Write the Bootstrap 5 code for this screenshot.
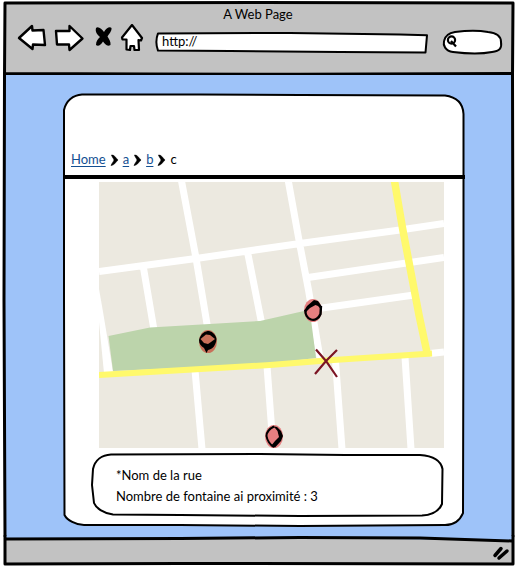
<!DOCTYPE html>
<html lang="fr">
<head>
<meta charset="utf-8">
<meta name="viewport" content="width=device-width, initial-scale=1">
<title>A Web Page</title>
<link href="https://cdn.jsdelivr.net/npm/bootstrap@5.3.0/dist/css/bootstrap.min.css" rel="stylesheet">
<style>
  body { font-family: Lato, "Open Sans", sans-serif; font-size: 13px; line-height: 21px; color: #000; background: #fff; }
  /* A sketched outline and the content it surrounds share one grid cell. */
  .sketch { display: grid; grid-template-columns: minmax(0, 1fr); }
  .sketch > * { grid-area: 1 / 1; min-width: 0; }
  .outline { width: 100%; height: 0; min-height: 100%; overflow: visible; }
  .outline path, .outline line { vector-effect: non-scaling-stroke; }
  .ink { stroke: #000; stroke-width: 3; stroke-linecap: round; stroke-linejoin: round; fill: none; }
  .thin { stroke-width: 2; }
  .chrome-bar { height: 75px; }
  .chrome-body { padding: 3px 12px 0 17px; }
  .page-title { line-height: 23px; padding-right: 4px; }
  .tools { height: 32px; margin-top: -2px; }
  .tool { display: block; padding: 0; border: 0; background: none; line-height: 0; }
  .tool svg, .crumb-sep, .lens, .grip { display: block; flex: none; }
  .address { height: 21px; margin-left: 10px; margin-right: 14px; margin-top: 8px; }
  .address .field { height: 19px; }
  .finder { width: 61px; height: 25px; margin-top: 5px; }
  .field { border: 0; background: transparent; padding: 0 7px; width: 100%; color: #000; outline-offset: -3px; }
  .finder .field { padding: 0 6px 0 2px; }
  .viewport-body { padding: 19px 50px 9px 63px; }
  .site-head { height: 81px; padding: 0 0 5px 8px; }
  .site-head a { color: #134f92; text-underline-offset: 2px; }
  .trail { gap: 4px; }
  .rule { height: 4px; background: #000; margin-bottom: 3px; }
  .map-box { padding: 0 21px 0 36px; }
  .map-box svg { display: block; width: 100%; height: auto; }
  .street-note { margin: 5px 21px 10px 28px; }
  .note-text { padding: 12px 24px 9px 25px; }
  .foot-bar { height: 31px; }
  .grip-row { padding: 8px 5px 0 0; }
</style>
<script src="https://cdn.jsdelivr.net/npm/bootstrap@5.3.0/dist/js/bootstrap.bundle.min.js"></script>
</head>
<body class="d-flex flex-column min-vh-100">

<header class="sketch chrome-bar">
  <svg class="outline" viewBox="0 0 515 75" preserveAspectRatio="none" aria-hidden="true">
    <path fill="#c2c2c2" d="M5 3H513V75H5z"/>
    <path class="ink" d="M4.500 75L5 3L260 2.500L513 3L512.500 75M5 73.500L150 74L300 74.200L512 73.500"/>
  </svg>
  <div class="chrome-body">
    <div class="page-title text-center">A Web Page</div>
    <div class="tools d-flex align-items-start">
      <button class="tool" type="button" aria-label="Back">
        <svg width="36" height="28" viewBox="17 24 36 28"><path d="M19 38L32 26L32.500 30.500L43.500 30L45 45L33 44.500L32.500 49z" fill="#fff" stroke="#000" stroke-width="2.400" stroke-linejoin="round"/></svg>
      </button>
      <button class="tool" type="button" aria-label="Forward">
        <svg width="38" height="28" viewBox="53 24 38 28"><path d="M56 31L69.500 31L69.500 26L82.500 38.500L69.500 50L69 44.500L57 44.500z" fill="#fff" stroke="#000" stroke-width="2.400" stroke-linejoin="round"/></svg>
      </button>
      <button class="tool" type="button" aria-label="Stop">
        <svg width="28" height="28" viewBox="91 24 28 28"><path d="M96 28C98 26 102 29 104 32C106 28 110 26 111.500 28C112 31 109 34 107.500 36.500C109 39 111 42 110.500 45C107 47 105 44 103 41.500C101 45 98 47 96 45C96 41 98 39 100 37C97 34 95 32 96 28z"/></svg>
      </button>
      <button class="tool" type="button" aria-label="Home page">
        <svg width="26" height="28" viewBox="119 24 26 28"><path d="M132 25L142 38L141 40.500L138.500 40L139 50L134.500 50L134 46L130.500 46L130 50L126.500 49.500L126.500 39.500L122.500 39.500L122 37.500z" fill="#fff" stroke="#000" stroke-width="2.200" stroke-linejoin="round"/></svg>
      </button>
      <div class="sketch address flex-grow-1">
        <svg class="outline" viewBox="155 31 273 22" preserveAspectRatio="none" aria-hidden="true">
          <path class="ink thin" style="fill:#fff" d="M158 32.500L290 32L400 33.500L427 34.500L425.500 52.500L340 52L230 51L158 50.500C156 45 156 38 158 32.500z"/>
        </svg>
        <input class="field" type="text" value="http://" aria-label="Address">
      </div>
      <div class="sketch finder">
        <svg class="outline" viewBox="442 29 61 25" preserveAspectRatio="none" aria-hidden="true">
          <path class="ink thin" style="fill:#fff" d="M455 32C470 30 480 30.500 488 32C498 33 501 37 501 42C502 48 500 51 492 52C482 54 465 53.500 453 52C445 51 443 45 444 41C445 36 449 33 455 32z"/>
        </svg>
        <label class="d-flex align-items-center ps-1">
          <svg class="lens" width="11" height="13" viewBox="446 37 11 13" aria-hidden="true"><circle cx="451.500" cy="42" r="3.600" fill="#fff" stroke="#000" stroke-width="2.200"/><path d="M451 43L456 48.500" stroke="#000" stroke-width="2.200"/></svg>
          <input class="field" type="search" aria-label="Search">
        </label>
      </div>
    </div>
  </div>
</header>

<main class="sketch flex-grow-1">
  <svg class="outline" viewBox="0 75 515 461" preserveAspectRatio="none" aria-hidden="true">
    <path fill="#9ec3f9" d="M4 75H513V536H4z"/>
    <path class="ink" d="M4.500 75L4 300L5 536M512.500 75L513 300L513 536"/>
  </svg>
  <div class="viewport-body">
    <div class="sketch">
      <svg class="outline" viewBox="63 94 402 433" preserveAspectRatio="none" aria-hidden="true">
        <path class="ink thin" style="fill:#fff" d="M82 94.500L200 94.500L300 95L445 95.500C456 97 463 103 463.500 114L463.500 300L463 514C460 521 454 526 445 526L300 527L180 526L84 526C76 526 67 521 64.500 516L64 300L64 110C66 101 73 95 82 94.500z"/>
      </svg>
      <div>
        <nav class="site-head d-flex align-items-end" aria-label="breadcrumb">
          <ol class="trail list-unstyled d-flex align-items-center mb-0">
            <li><a href="#home">Home</a></li>
            <li aria-hidden="true"><svg class="crumb-sep" width="9" height="12" viewBox="0 0 9 12"><path d="M1.500 1C4.500 1 5 3 8 6C5 9 4.500 11 1 11.500C2 9 4 7 4 6C4 5 2 3 1.500 1z" stroke="#000" stroke-width=".6"/></svg></li>
            <li><a href="#a">a</a></li>
            <li aria-hidden="true"><svg class="crumb-sep" width="9" height="12" viewBox="0 0 9 12"><path d="M1.500 1C4.500 1 5 3 8 6C5 9 4.500 11 1 11.500C2 9 4 7 4 6C4 5 2 3 1.500 1z" stroke="#000" stroke-width=".6"/></svg></li>
            <li><a href="#b">b</a></li>
            <li aria-hidden="true"><svg class="crumb-sep" width="9" height="12" viewBox="0 0 9 12"><path d="M1.500 1C4.500 1 5 3 8 6C5 9 4.500 11 1 11.500C2 9 4 7 4 6C4 5 2 3 1.500 1z" stroke="#000" stroke-width=".6"/></svg></li>
            <li aria-current="page">c</li>
          </ol>
        </nav>
        <div class="rule"></div>
        <div class="map-box">
          <svg viewBox="99 182 345 266" role="img" aria-label="Plan du quartier">
            <path fill="#ece9e0" d="M99 182H444V448H99z"/>
            <path fill="#fff" d="M99 289L102.700 310L113 372L104 373L99 322z"/>
            <g fill="none" stroke="#fff" stroke-width="7">
              <path d="M181.500 181L196 258L208 330M99 271.500L196 258.500L300 243.500L400 230L444 223.500M143.500 268L154 330M247.500 252L262 325M288.300 181L299.500 243L308.500 290L320 358M308 277.500L444 257.500M315 309L414 295M430 353.500L444 352M195 370L202 449M267 366L272.500 440M335.500 361L342 449M405 357L411 449"/>
            </g>
            <path fill="#bcd4ab" d="M108.500 336L150 327.500L260 321L304 311L310 312L316 358L265 364L113 371z"/>
            <path fill="none" stroke="#fff96c" stroke-width="6" d="M99 375L270 365L326 360.500L432 353.500"/>
            <path fill="none" stroke="#fff96c" stroke-width="7.500" d="M394.500 181L402.500 228L419 315L427.500 355"/>
            <ellipse cx="313" cy="310.500" rx="9" ry="11.500" fill="#e57f80"/>
            <path d="M305.500 310C305 314 307 318 311 319.500C315 321 319 318 320.500 314L321 306" fill="none" stroke="#000" stroke-width="2.400"/>
            <path fill="#000" d="M304 311L307 306L314 300L318 301L321.500 306L321.500 310L318 306L315.500 305L310 308L306 312z"/>
            <ellipse cx="208" cy="341.500" rx="9" ry="11.500" fill="#c8705a"/>
            <path fill="#000" d="M199 340C201 333 205 331 209 331C213 332 216 335 216.500 339C216 345 213 349 208 350L206.500 353L204 348C201 346 199 344 199 340z"/>
            <path fill="#c8705a" d="M200.500 339L206 334.500L210 335L215 339L211 342L208 344L204 343z"/>
            <ellipse cx="274" cy="436.500" rx="9" ry="11.500" fill="#e57f80"/>
            <path d="M274 426.500C269 429 266.500 433 266.500 436C267 440 270 445 274 447" fill="none" stroke="#000" stroke-width="2"/>
            <path fill="#000" d="M272 426L277 427L281 431L283 436L281 441L275 447.500L271 446L275 441L279 437L277.500 431L275 428z"/>
            <path d="M316 349.500L326 361L337 377M337 350L326 361L315 374" fill="none" stroke="#7b1423" stroke-width="2.200"/>
          </svg>
        </div>
        <section class="sketch street-note">
          <svg class="outline" viewBox="91 453 353 63" preserveAspectRatio="none" aria-hidden="true">
            <path class="ink thin" style="fill:#fff" d="M111 454.500L260 454L345 455L420 455C434 456 441 461 442.500 469L442 504C439 511 433 515 422 515.500L300 516L180 515L113 514.500C103 513 96 508 94 503L92 485L93 469C95 460 102 455 111 454.500z"/>
          </svg>
          <div class="note-text">
            <div>*Nom de la rue</div>
            <div>Nombre de fontaine ai proximité : 3</div>
          </div>
        </section>
      </div>
    </div>
  </div>
</main>

<footer class="sketch foot-bar">
  <svg class="outline" viewBox="0 536 515 31" preserveAspectRatio="none" aria-hidden="true">
    <path fill="#9ec3f9" d="M4 536H513V542H4z"/>
    <path fill="#c2c2c2" d="M5 539L330 538L513 541V564H5z"/>
    <path class="ink" d="M5 536L5 564L180 563.500L513 564L513 536M5 539L180 538.500L300 537.500L420 538L512 541"/>
  </svg>
  <div class="grip-row d-flex justify-content-end align-items-start">
    <svg class="grip" width="18" height="18" viewBox="492 544 18 18" aria-hidden="true"><path d="M495 555.500L501 548.500M499 558L507 551" fill="none" stroke="#000" stroke-width="3.500" stroke-linecap="round"/></svg>
  </div>
</footer>

</body>
</html>
